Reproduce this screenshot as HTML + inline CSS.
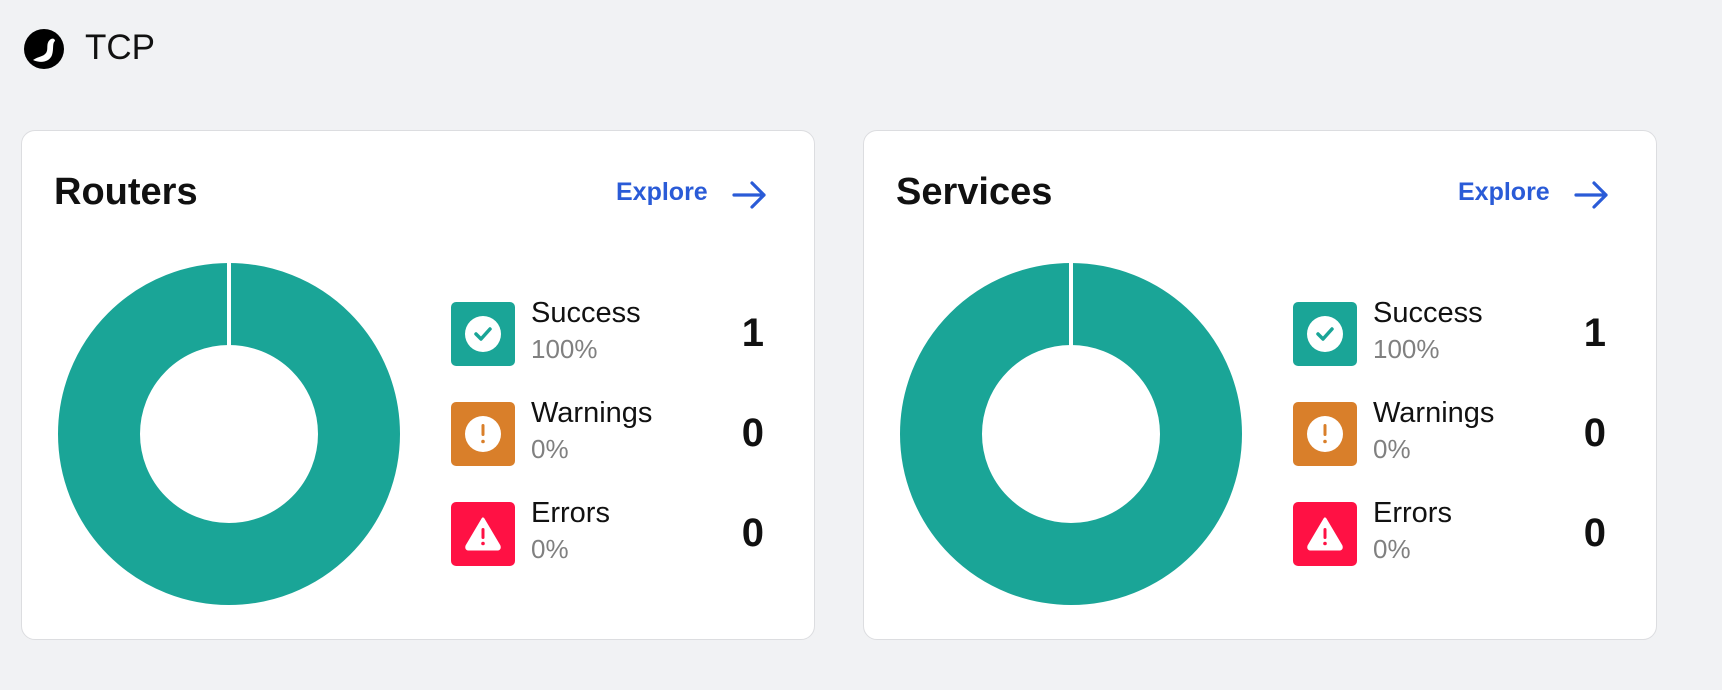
<!DOCTYPE html>
<html><head><style>
body{margin:0;width:1722px;height:690px;background:#f1f2f4;font-family:"Liberation Sans",sans-serif;position:relative;overflow:hidden}
.card{position:absolute;top:130px;width:792px;height:508px;background:#fff;border:1px solid #dcdde0;border-radius:14px}
.title{position:absolute;left:32px;top:40px;font-size:38px;font-weight:bold;color:#111}
.explore{position:absolute;left:594px;top:47px;font-size:25px;font-weight:bold;color:#2a5bd7}
.arrow{position:absolute;left:710px;top:49px}
.donut{position:absolute;left:36px;top:132px}
.row{position:absolute;left:429px;width:313px;height:64px}
.ic{position:absolute;left:0;top:0;width:64px;height:64px;border-radius:5px}
.lbl{position:absolute;left:80px;top:-5px;font-size:29px;color:#111}
.pct{position:absolute;left:80px;top:32px;font-size:26px;color:#808080}
.num{position:absolute;right:0;top:9px;font-size:40px;font-weight:bold;color:#111}
</style></head><body>
<svg style="position:absolute;left:24px;top:29px" width="40" height="40" viewBox="0 0 40 40"><circle cx="20" cy="20" r="20" fill="#000"/><path d="M9 31 C15 27 19 28 22 24 C25 20 21 14 27 10 C29 9 31 10 31 12 C28 14 30 20 28 26 C26 32 18 35 9 31 Z" fill="#fff"/></svg>
<div style="position:absolute;left:85px;top:28px;font-size:35px;color:#111">TCP</div>

<div class="card" style="left:21px">
<div class="title">Routers</div><div class="explore">Explore</div>
<svg class="arrow" width="36" height="30" viewBox="0 0 36 30"><path d="M2 15H32M20 3L32 15L20 27" stroke="#2a5bd7" stroke-width="3.2" fill="none" stroke-linecap="round" stroke-linejoin="round"/></svg>
<svg class="donut" width="342" height="342" viewBox="0 0 342 342"><circle cx="171" cy="171" r="130" fill="none" stroke="#1aa597" stroke-width="82"/><rect x="169" y="0" width="4" height="90" fill="#fff"/></svg>
<div class="row" style="top:171px"><div class="ic" style="background:#1aa597"><svg width="64" height="64"><circle cx="32" cy="32" r="18" fill="#fff"/><path d="M25 32L30 37L39 27" stroke="#1aa597" stroke-width="3.5" fill="none" stroke-linecap="round" stroke-linejoin="round"/></svg></div><div class="lbl">Success</div><div class="pct">100%</div><div class="num">1</div></div>
<div class="row" style="top:271px"><div class="ic" style="background:#d97f2a"><svg width="64" height="64"><circle cx="32" cy="32" r="18" fill="#fff"/><rect x="30.5" y="22" width="3" height="12" rx="1.5" fill="#d97f2a"/><circle cx="32" cy="39.5" r="1.8" fill="#d97f2a"/></svg></div><div class="lbl">Warnings</div><div class="pct">0%</div><div class="num">0</div></div>
<div class="row" style="top:371px"><div class="ic" style="background:#ff1144"><svg width="64" height="64"><path d="M32 17L48 44Q49 47 46 47H18Q15 47 16 44Z" fill="#fff" stroke="#fff" stroke-width="3" stroke-linejoin="round"/><rect x="30.5" y="26" width="3" height="11" rx="1.5" fill="#ff1144"/><circle cx="32" cy="41.5" r="1.8" fill="#ff1144"/></svg></div><div class="lbl">Errors</div><div class="pct">0%</div><div class="num">0</div></div>
</div>

<div class="card" style="left:863px">
<div class="title">Services</div><div class="explore">Explore</div>
<svg class="arrow" width="36" height="30" viewBox="0 0 36 30"><path d="M2 15H32M20 3L32 15L20 27" stroke="#2a5bd7" stroke-width="3.2" fill="none" stroke-linecap="round" stroke-linejoin="round"/></svg>
<svg class="donut" width="342" height="342" viewBox="0 0 342 342"><circle cx="171" cy="171" r="130" fill="none" stroke="#1aa597" stroke-width="82"/><rect x="169" y="0" width="4" height="90" fill="#fff"/></svg>
<div class="row" style="top:171px"><div class="ic" style="background:#1aa597"><svg width="64" height="64"><circle cx="32" cy="32" r="18" fill="#fff"/><path d="M25 32L30 37L39 27" stroke="#1aa597" stroke-width="3.5" fill="none" stroke-linecap="round" stroke-linejoin="round"/></svg></div><div class="lbl">Success</div><div class="pct">100%</div><div class="num">1</div></div>
<div class="row" style="top:271px"><div class="ic" style="background:#d97f2a"><svg width="64" height="64"><circle cx="32" cy="32" r="18" fill="#fff"/><rect x="30.5" y="22" width="3" height="12" rx="1.5" fill="#d97f2a"/><circle cx="32" cy="39.5" r="1.8" fill="#d97f2a"/></svg></div><div class="lbl">Warnings</div><div class="pct">0%</div><div class="num">0</div></div>
<div class="row" style="top:371px"><div class="ic" style="background:#ff1144"><svg width="64" height="64"><path d="M32 17L48 44Q49 47 46 47H18Q15 47 16 44Z" fill="#fff" stroke="#fff" stroke-width="3" stroke-linejoin="round"/><rect x="30.5" y="26" width="3" height="11" rx="1.5" fill="#ff1144"/><circle cx="32" cy="41.5" r="1.8" fill="#ff1144"/></svg></div><div class="lbl">Errors</div><div class="pct">0%</div><div class="num">0</div></div>
</div>
</body></html>
